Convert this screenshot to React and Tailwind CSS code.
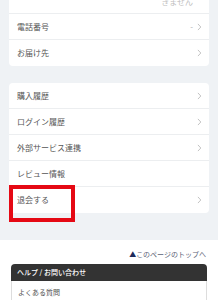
import React from 'react';

const Chevron = () => (
    <svg width="5" height="8" viewBox="0 0 5 8" fill="none" className="shrink-0">
        <path d="M1.2 1.2l2.6 2.8-2.6 2.8" stroke="#b4b4b4" strokeWidth="0.8" strokeLinecap="round" strokeLinejoin="round" />
    </svg>
);

const Row = ({ label, value, arrow = true, last = false, children }) => (
    <div className={`relative h-[26px] flex items-center justify-between pl-[8px] pr-[7px] ${last ? '' : 'border-b border-[#eceef0]'}`}>
        <span className="text-[8px] leading-none text-[#555555]">{label}</span>
        <div className="flex items-center gap-[4px]">
            {value && <span className="text-[8px] leading-none text-[#b0b0b0]">{value}</span>}
            {arrow && <Chevron />}
        </div>
        {children}
    </div>
);

export default function App() {
    return (
        <div className="w-[218px] h-[300px] overflow-hidden bg-white" style={{ fontFamily: '"Noto Sans CJK JP", "Noto Sans", sans-serif' }}>
            <div className="bg-[#eff2f5] px-[9px] pb-[27px]">
                <div className="bg-white rounded-b-[4px]">
                    <div className="h-[14px] overflow-hidden border-b border-[#eceef0] flex justify-end pr-[16px]">
                        <span className="text-[8px] leading-[8px] -mt-[2px] text-[#c0c0c0]">きません</span>
                    </div>
                    <Row label="電話番号" value="-" />
                    <Row label="お届け先" last />
                </div>
                <div className="bg-white rounded-[4px] mt-[17px]">
                    <Row label="購入履歴" />
                    <Row label="ログイン履歴" />
                    <Row label="外部サービス連携" />
                    <Row label="レビュー情報" arrow={false} />
                    <Row label="退会する" last>
                        <div className="absolute left-0 top-[-2px] w-[66px] h-[37px] border-[4px] border-[#e50914] z-10" />
                    </Row>
                </div>
            </div>
            <div className="bg-white px-[11px]">
                <div className="flex justify-end pt-[9px] pb-[5px] pr-[1px]">
                    <span className="text-[7px] leading-[10px] text-[#5a6275]"><span className="text-[#1e2b5a]">▲</span>このページのトップへ</span>
                </div>
                <div className="bg-[#333333] rounded-t-[4px] h-[17px] flex items-center px-[6px]">
                    <span className="text-[7px] leading-none text-white font-medium">ヘルプ / お問い合わせ</span>
                </div>
                <div className="border-x border-[#dddddd] h-[22px] flex items-center px-[6px]">
                    <span className="text-[7px] leading-none text-[#505050]">よくある質問</span>
                </div>
            </div>
        </div>
    );
}
